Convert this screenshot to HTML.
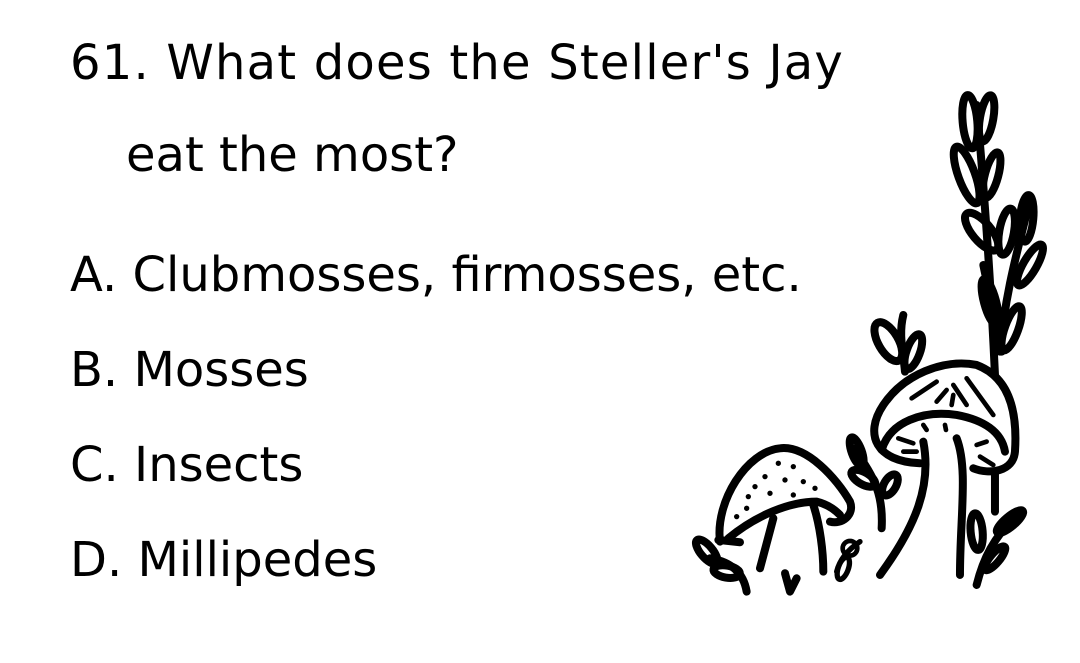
<!DOCTYPE html>
<html><head><meta charset="utf-8"><style>
body{margin:0;width:1080px;height:663px;background:#fff;overflow:hidden;position:relative;font-family:"DejaVu Sans","Liberation Sans",sans-serif;color:#000}
.t{position:absolute;font-size:48px;line-height:48px;white-space:nowrap}
</style></head><body>
<div class="t" style="left:70px;top:39px;letter-spacing:1.2px">61. What does the Steller's Jay</div>
<div class="t" style="left:126px;top:131px">eat the most?</div>
<div class="t" style="left:70px;top:251px">A. Clubmosses, firmosses, etc.</div>
<div class="t" style="left:70px;top:346px">B. Mosses</div>
<div class="t" style="left:70px;top:441px">C. Insects</div>
<div class="t" style="left:70px;top:536px">D. Millipedes</div>
<svg width="1080" height="663" style="position:absolute;left:0;top:0">
<g transform="translate(690,85) scale(0.3333)" fill="none" stroke="#000" stroke-width="24" stroke-linecap="round" stroke-linejoin="round">
<path d="M915 870 C905 650 890 400 860 60"/>
<ellipse cx="840" cy="110" rx="22" ry="80" transform="rotate(-5 840 110)"/>
<ellipse cx="890" cy="100" rx="20" ry="70" transform="rotate(10 890 100)"/>
<ellipse cx="830" cy="270" rx="25" ry="90" transform="rotate(-20 830 270)"/>
<ellipse cx="905" cy="270" rx="20" ry="70" transform="rotate(15 905 270)"/>
<ellipse cx="875" cy="440" rx="28" ry="70" transform="rotate(-40 875 440)"/>
<ellipse cx="950" cy="440" rx="22" ry="70" transform="rotate(10 950 440)"/>
<path d="M880 540 L935 800"/>
<path d="M930 800 C945 620 990 470 1020 345"/>
<ellipse cx="1010" cy="400" rx="20" ry="70" transform="rotate(5 1010 400)"/>
<ellipse cx="1020" cy="540" rx="20" ry="70" transform="rotate(30 1020 540)"/>
<ellipse cx="965" cy="730" rx="20" ry="70" transform="rotate(20 965 730)"/>
<ellipse cx="900" cy="650" rx="18" ry="70" transform="rotate(-15 900 650)"/>
<path d="M645 860 C640 800 625 750 640 690"/>
<ellipse cx="595" cy="770" rx="30" ry="65" transform="rotate(-30 595 770)"/>
<ellipse cx="670" cy="800" rx="20" ry="55" transform="rotate(20 670 800)"/>
<path d="M690 1135 C560 1130 520 1050 580 960 C640 870 760 820 860 840 C940 870 985 950 975 1100 C970 1160 900 1170 850 1150"/>
<path d="M575 1095 C600 1010 700 975 800 990 C880 1005 935 1040 945 1100"/>
<path d="M700 1070 C725 1200 680 1320 570 1470"/>
<path d="M800 1060 C835 1150 810 1300 810 1470"/>
<path d="M915 1165 L915 1280"/>
<g stroke-width="14"><path d="M665 940 L740 890"/><path d="M740 950 L770 915"/><path d="M785 960 L790 930"/><path d="M790 900 L830 960"/><path d="M830 880 L910 990"/><path d="M700 1020 L710 1035"/><path d="M765 1020 L768 1035"/><path d="M625 1060 L670 1075"/><path d="M640 1100 L680 1100"/><path d="M860 1080 L890 1070"/><path d="M870 1115 L910 1140"/></g>
<path d="M90 1370 C75 1250 170 1100 270 1090 C350 1080 440 1180 480 1250 C495 1290 455 1320 420 1310"/>
<path d="M115 1360 C200 1290 300 1250 380 1250 C420 1260 440 1280 450 1290"/>
<path d="M85 1365 L150 1372"/>
<path d="M250 1300 L210 1450"/>
<path d="M370 1260 C390 1320 400 1400 400 1460"/>
<path d="M285 1465 L300 1520 L320 1480"/>
<g fill="#000" stroke="none"><circle cx="265" cy="1135" r="8"/><circle cx="310" cy="1145" r="8"/><circle cx="225" cy="1175" r="8"/><circle cx="285" cy="1185" r="8"/><circle cx="340" cy="1190" r="8"/><circle cx="195" cy="1205" r="8"/><circle cx="240" cy="1225" r="8"/><circle cx="310" cy="1230" r="8"/><circle cx="375" cy="1210" r="8"/><circle cx="175" cy="1235" r="8"/><circle cx="170" cy="1270" r="8"/><circle cx="140" cy="1295" r="8"/></g>
<ellipse cx="50" cy="1400" rx="18" ry="45" transform="rotate(-40 50 1400)"/>
<ellipse cx="110" cy="1460" rx="40" ry="18" transform="rotate(10 110 1460)"/>
<path d="M60 1420 C120 1430 160 1460 170 1520"/>
<path d="M575 1330 C580 1240 560 1180 490 1090"/>
<ellipse cx="500" cy="1100" rx="15" ry="45" transform="rotate(-20 500 1100)"/>
<ellipse cx="520" cy="1180" rx="40" ry="18" transform="rotate(30 520 1180)"/>
<ellipse cx="600" cy="1200" rx="18" ry="35" transform="rotate(30 600 1200)"/>
<path d="M440 1460 C450 1420 480 1390 510 1370" stroke-width="16"/>
<circle cx="480" cy="1390" r="22" stroke-width="14"/>
<ellipse cx="460" cy="1450" rx="15" ry="35" transform="rotate(20 460 1450)" stroke-width="16"/>
<path d="M860 1500 C880 1420 910 1360 980 1290"/>
<ellipse cx="860" cy="1340" rx="18" ry="55" transform="rotate(-5 860 1340)"/>
<ellipse cx="960" cy="1310" rx="15" ry="50" transform="rotate(50 960 1310)"/>
<ellipse cx="915" cy="1420" rx="14" ry="45" transform="rotate(40 915 1420)"/>
</g>
</svg>
</body></html>
